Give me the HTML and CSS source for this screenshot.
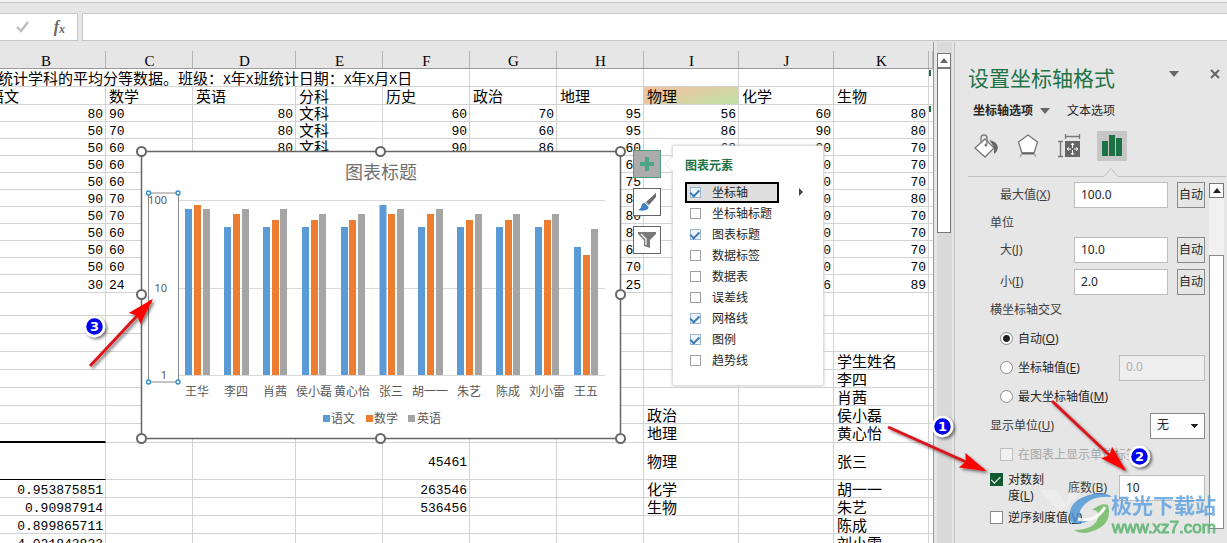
FILE: index.html
```html
<!DOCTYPE html>
<html lang="zh-CN">
<head>
<meta charset="utf-8">
<title>设置坐标轴格式</title>
<link rel="stylesheet" href="styles.css">
</head>
<body>
<div class="ribbon-edge"></div>
<header class="formula-bar">
  <div class="formula-tools">
    <button class="tool" aria-label="输入"><svg width="16" height="14" viewBox="0 0 16 14"><path d="M2 7l4 4 7-9" fill="none" stroke="#bdbdbd" stroke-width="2.4"/></svg></button>
    <button class="tool fx" aria-label="插入函数">f<sub>x</sub></button>
  </div>
  <input class="formula-input" aria-label="编辑栏">
</header>
<main class="workspace">
  <section class="sheet">
    <table class="grid">
      <colgroup><col class="w-b"><col class="w-s"><col class="w-d"><col class="w-s"><col class="w-s"><col class="w-s"><col class="w-s"><col class="w-l"><col class="w-l"><col class="w-l"><col></colgroup>
      <thead><tr><th>B</th><th>C</th><th>D</th><th>E</th><th>F</th><th>G</th><th>H</th><th>I</th><th>J</th><th>K</th><th></th></tr></thead>
      <tbody>
        <tr class="tall"><td colspan="5" class="title">统计学科的平均分等数据。班级：<span>X</span>年<span>X</span>班统计日期：<span>X</span>年<span>X</span>月<span>X</span>日</td><td></td><td></td><td></td><td></td><td></td><td class="flag"></td></tr>
        <tr class="tall"><td>语文</td><td>数学</td><td>英语</td><td>分科</td><td>历史</td><td>政治</td><td>地理</td><td class="tint">物理</td><td>化学</td><td>生物</td><td></td></tr>
        <tr><td class="n">80</td><td class="m">90</td><td class="n">80</td><td>文科</td><td class="n">60</td><td class="n">70</td><td class="n">95</td><td class="n">56</td><td class="n">60</td><td class="n">80</td><td class="flag"></td></tr>
        <tr><td class="n">50</td><td class="m">70</td><td class="n">80</td><td>文科</td><td class="n">90</td><td class="n">60</td><td class="n">95</td><td class="n">86</td><td class="n">90</td><td class="n">80</td><td></td></tr>
        <tr><td class="n">50</td><td class="m">60</td><td class="n">80</td><td>文科</td><td class="n">90</td><td class="n">86</td><td class="n">60</td><td class="n">68</td><td class="n">90</td><td class="n">70</td><td></td></tr>
        <tr><td class="n">50</td><td class="m">60</td><td></td><td></td><td></td><td></td><td class="n">65</td><td></td><td class="n">70</td><td class="n">70</td><td></td></tr>
        <tr><td class="n">50</td><td class="m">60</td><td></td><td></td><td></td><td></td><td class="n">75</td><td></td><td class="n">80</td><td class="n">70</td><td></td></tr>
        <tr><td class="n">90</td><td class="m">70</td><td></td><td></td><td></td><td></td><td class="n">85</td><td></td><td class="n">80</td><td class="n">80</td><td></td></tr>
        <tr><td class="n">50</td><td class="m">70</td><td></td><td></td><td></td><td></td><td class="n">80</td><td></td><td class="n">80</td><td class="n">70</td><td></td></tr>
        <tr><td class="n">50</td><td class="m">60</td><td></td><td></td><td></td><td></td><td class="n">85</td><td></td><td class="n">80</td><td class="n">70</td><td></td></tr>
        <tr><td class="n">50</td><td class="m">60</td><td></td><td></td><td></td><td></td><td class="n">62</td><td></td><td class="n">80</td><td class="n">70</td><td></td></tr>
        <tr><td class="n">50</td><td class="m">60</td><td></td><td></td><td></td><td></td><td class="n">70</td><td></td><td class="n">70</td><td class="n">70</td><td></td></tr>
        <tr class="tall"><td class="n">30</td><td class="m">24</td><td></td><td></td><td></td><td></td><td class="n">25</td><td></td><td class="n">66</td><td class="n">89</td><td></td></tr>
        <tr class="gap"><td></td><td></td><td></td><td></td><td></td><td></td><td></td><td></td><td></td><td></td><td></td></tr>
        <tr class="tall"><td></td><td></td><td></td><td></td><td></td><td></td><td></td><td></td><td></td><td></td><td></td></tr>
        <tr class="tall"><td></td><td></td><td></td><td></td><td></td><td></td><td></td><td></td><td></td><td></td><td></td></tr>
        <tr class="tall"><td></td><td></td><td></td><td></td><td></td><td></td><td></td><td></td><td></td><td>学生姓名</td><td></td></tr>
        <tr class="tall"><td></td><td></td><td></td><td></td><td></td><td></td><td></td><td></td><td></td><td>李四</td><td></td></tr>
        <tr class="tall"><td></td><td></td><td></td><td></td><td></td><td></td><td></td><td></td><td></td><td>肖茜</td><td></td></tr>
        <tr class="tall"><td></td><td></td><td></td><td></td><td></td><td></td><td></td><td>政治</td><td></td><td>侯小磊</td><td></td></tr>
        <tr class="plus"><td class="ruled"></td><td></td><td></td><td></td><td></td><td></td><td></td><td>地理</td><td></td><td>黄心怡</td><td></td></tr>
        <tr class="high"><td class="thin-rule"></td><td></td><td></td><td></td><td class="n">45461</td><td></td><td></td><td>物理</td><td></td><td>张三</td><td></td></tr>
        <tr class="tall"><td class="n">0.953875851</td><td></td><td></td><td></td><td class="n">263546</td><td></td><td></td><td>化学</td><td></td><td>胡一一</td><td></td></tr>
        <tr class="tall"><td class="n">0.90987914</td><td></td><td></td><td></td><td class="n">536456</td><td></td><td></td><td>生物</td><td></td><td>朱艺</td><td></td></tr>
        <tr class="tall"><td class="n">0.899865711</td><td></td><td></td><td></td><td></td><td></td><td></td><td></td><td></td><td>陈成</td><td></td></tr>
        <tr class="tall"><td class="n">4.021843833</td><td></td><td></td><td></td><td></td><td></td><td></td><td></td><td></td><td>刘小雷</td><td></td></tr>
      </tbody>
    </table>

    <svg class="chart" viewBox="133 143 496 304" width="496" height="304" role="img" aria-label="图表标题">
      <rect x="141.5" y="151.5" width="479" height="287" fill="#fff" stroke="#666" stroke-width="1.5"/>
      <text class="chart-title" x="381" y="179">图表标题</text>
      <path d="M179 200.5H605M179 288.5H605M179 375.5H605" stroke="#d9d9d9"/>
      <g fill="none" stroke-width="7">
        <path stroke="#5b9bd5" d="M188.500 375V209M227.500 375V227M266.500 375V227M305.500 375V227M344.500 375V227M383 375V205M421.500 375V227M460.500 375V227M499.500 375V227M538.500 375V227M577.500 375V247"/>
        <path stroke="#ed7d31" d="M197.500 375V205M236.500 375V214M275.500 375V220M314.500 375V220M352.500 375V220M391.500 375V214M430.500 375V214M469.500 375V220M508.500 375V220M547.500 375V220M586.500 375V255"/>
        <path stroke="#a5a5a5" d="M206.500 375V209M245.500 375V209M283.500 375V209M322.500 375V214M361.500 375V214M400.500 375V209M439.500 375V209M478.500 375V214M516.500 375V214M555.500 375V214M594.500 375V229"/>
      </g>
      <g class="axis-num"><text x="167" y="204">100</text><text x="167" y="292">10</text><text x="167" y="379">1</text></g>
      <g class="axis-name"><text x="197" y="396">王华</text><text x="236" y="396">李四</text><text x="275" y="396">肖茜</text><text x="314" y="396">侯小磊</text><text x="352" y="396">黄心怡</text><text x="391" y="396">张三</text><text x="430" y="396">胡一一</text><text x="469" y="396">朱艺</text><text x="508" y="396">陈成</text><text x="547" y="396">刘小雷</text><text x="586" y="396">王五</text></g>
      <g class="legend"><path fill="#5b9bd5" d="M323 415h7v7h-7z"/><text x="331" y="423">语文</text><path fill="#ed7d31" d="M366 415h7v7h-7z"/><text x="374" y="423">数学</text><path fill="#a5a5a5" d="M408 415h7v7h-7z"/><text x="417" y="423">英语</text></g>
      <path d="M148.500 193V382H178.500V193z" fill="none" stroke="#8a8a8a"/>
      <g fill="#fff" stroke="#2e8bc9" stroke-width="1.300"><circle cx="148.500" cy="193" r="2"/><circle cx="178" cy="193" r="2"/><circle cx="148.500" cy="382" r="2"/><circle cx="178" cy="382" r="2"/></g>
      <g fill="#fff" stroke="#666" stroke-width="2"><circle cx="141.500" cy="151.500" r="4.500"/><circle cx="380.500" cy="151.500" r="4.500"/><circle cx="620.500" cy="151.500" r="4.500"/><circle cx="141.500" cy="294.500" r="4.500"/><circle cx="620.500" cy="294.500" r="4.500"/><circle cx="141.500" cy="438.500" r="4.500"/><circle cx="380.500" cy="438.500" r="4.500"/><circle cx="620.500" cy="438.500" r="4.500"/></g>
    </svg>

    <div class="chart-tools">
      <button class="chart-tool on" aria-label="图表元素"><svg width="26" height="26" viewBox="0 0 26 26"><path d="M13 6v14M6 13h14" stroke="#4da386" stroke-width="4"/></svg></button>
      <button class="chart-tool" aria-label="图表样式"><svg width="26" height="26" viewBox="0 0 26 26"><path d="M22 4v4l-7 8-3-3z" fill="#6b6b6b"/><path d="M11 13l4 4-1 3c-3 2-7 2-10 1 3-1 3-3 4-6z" fill="#3f7fc1"/><path d="M10 13l5 5" stroke="#fff"/></svg></button>
      <button class="chart-tool" aria-label="图表筛选器"><svg width="26" height="26" viewBox="0 0 26 26"><path d="M4 5h18v2l-6 6v8l-6-2v-6L4 7z" fill="#7a7a7a"/><path d="M7 7l5 5v6" fill="none" stroke="#fff" stroke-width="1.200"/></svg></button>
    </div>

    <aside class="flyout">
      <svg class="flyout-notch" width="10" height="18" viewBox="0 0 10 18"><path d="M10 0L1 9l9 9z" fill="#fff"/><path d="M9 1L1 9l8 8" fill="none" stroke="#e4e4e4"/></svg>
      <h2>图表元素</h2>
      <label class="element current"><input type="checkbox" checked><span>坐标轴</span></label>
      <label class="element"><input type="checkbox"><span>坐标轴标题</span></label>
      <label class="element"><input type="checkbox" checked><span>图表标题</span></label>
      <label class="element"><input type="checkbox"><span>数据标签</span></label>
      <label class="element"><input type="checkbox"><span>数据表</span></label>
      <label class="element"><input type="checkbox"><span>误差线</span></label>
      <label class="element"><input type="checkbox" checked><span>网格线</span></label>
      <label class="element"><input type="checkbox" checked><span>图例</span></label>
      <label class="element"><input type="checkbox"><span>趋势线</span></label>
      <svg class="flyout-more" width="5" height="8" viewBox="0 0 5 8"><path d="M0 0l4 4-4 4z" fill="#444"/></svg>
    </aside>
  </section>

  <div class="sheet-scroll">
    <button class="scroll-up" aria-label="向上滚动"><svg width="8" height="5" viewBox="0 0 8 5"><path d="M0 5l4-5 4 5z" fill="#666"/></svg></button>
    <div class="sheet-thumb"></div>
  </div>

  <aside class="pane">
    <div class="pane-head">
      <h1>设置坐标轴格式</h1>
      <button class="plain" aria-label="任务窗格选项"><svg width="10" height="6" viewBox="0 0 10 6"><path d="M0 0h10L5 6z" fill="#666"/></svg></button>
      <button class="plain" aria-label="关闭"><svg width="10" height="10" viewBox="0 0 10 10"><path d="M1 1l8 8M9 1L1 9" stroke="#666" stroke-width="2"/></svg></button>
    </div>
    <nav class="tabs">
      <button class="plain tab strong">坐标轴选项<svg width="10" height="6" viewBox="0 0 10 6"><path d="M0 0h10L5 6z" fill="#666"/></svg></button>
      <button class="plain tab">文本选项</button>
    </nav>
    <div class="categories">
      <button class="plain cat" aria-label="填充与线条"><svg width="30" height="30" viewBox="0 0 30 30"><path d="M18 9q8 1 9 8-1 4-4 6 1-8-5-14z" fill="#666"/><path d="M14 8l9 9-9 9-10-9z" fill="#fff" stroke="#777" stroke-width="1.300"/><path d="M10 11V7q0-3 3-3t3 3v6" fill="none" stroke="#777" stroke-width="1.300"/><circle cx="15" cy="14" r="1.500" fill="#777"/></svg></button>
      <button class="plain cat" aria-label="效果"><svg width="30" height="30" viewBox="0 0 30 30"><path d="M15 4l9.500 7-3.500 11H9L5.500 11z" fill="#fff" stroke="#777" stroke-width="1.300"/><path d="M9 22l-2 4M21 22l2 4" stroke="#aaa" stroke-width="1.500"/><path d="M9 22.500h12" stroke="#666" stroke-width="2"/></svg></button>
      <button class="plain cat" aria-label="大小与属性"><svg width="30" height="30" viewBox="0 0 30 30"><path d="M10.500 3v5M24.500 3v5M11 5.500h13M3 10.500h5M3 25.500h5M5.500 11v14" stroke="#777" stroke-width="1.300"/><path d="M10 10h15v16H10z" fill="#666"/><path d="M17.500 12v5M17.500 19v5M12 18h4M19 18h4M16 14l1.500-2 1.500 2M16 22l1.500 2 1.500-2M14 16.500L12 18l2 1.500M21 16.500l2 1.500-2 1.500" stroke="#fff" fill="none"/></svg></button>
      <button class="plain cat on" aria-label="坐标轴选项"><svg width="30" height="30" viewBox="0 0 30 30"><path d="M5 10h6v15H5zM12 4h6v21h-6zM19 7h6v18h-6z" fill="#1e7145"/></svg></button>
    </div>
    <svg class="divider" width="260" height="10" viewBox="0 0 260 10"><path d="M0 8.500H136l7-8 7 8H258" fill="none" stroke="#c0c0c0"/></svg>
    <div class="pane-body">
      <form class="options">
        <div class="row"><label class="inset" for="max">最大值(<u>X</u>)</label><input class="field" id="max" value="100.0"><button type="button" class="auto">自动</button></div>
        <div class="row group">单位</div>
        <div class="row"><label class="inset" for="major">大(<u>J</u>)</label><input class="field" id="major" value="10.0"><button type="button" class="auto">自动</button></div>
        <div class="row spaced"><label class="inset" for="minor">小(<u>I</u>)</label><input class="field" id="minor" value="2.0"><button type="button" class="auto">自动</button></div>
        <div class="row group">横坐标轴交叉</div>
        <div class="row choice"><label class="inset pick"><input type="radio" name="cross" checked><span>自动(<u>O</u>)</span></label></div>
        <div class="row choice"><label class="inset pick"><input type="radio" name="cross"><span>坐标轴值(<u>E</u>)</span></label><input class="field wide" value="0.0" aria-label="坐标轴值" disabled></div>
        <div class="row choice"><label class="inset pick"><input type="radio" name="cross"><span>最大坐标轴值(<u>M</u>)</span></label></div>
        <div class="row choice"><label class="outer" for="unit">显示单位(<u>U</u>)</label><select id="unit"><option>无</option></select></div>
        <div class="row choice"><label class="inset pick off"><input type="checkbox" disabled><span>在图表上显示单位标签(<u>S</u>)</span></label></div>
        <div class="row log"><label class="outer pick"><input type="checkbox" checked><span>对数刻<br>度(<u>L</u>)</span></label><label class="base" for="base">底数(<u>B</u>)</label><input class="field wide" id="base" value="10"></div>
        <div class="row choice"><label class="outer pick"><input type="checkbox"><span>逆序刻度值(<u>V</u>)</span></label></div>
      </form>
      <div class="pane-scroll">
        <button class="pane-up" aria-label="向上滚动"><svg width="8" height="5" viewBox="0 0 8 5"><path d="M0 5l4-5 4 5z" fill="#222"/></svg></button>
        <div class="pane-thumb"></div>
      </div>
    </div>
  </aside>
</main>

<svg class="notes" width="1227" height="543" viewBox="0 0 1227 543" aria-hidden="true">
  <defs>
    <marker id="head" markerUnits="userSpaceOnUse" markerWidth="28" markerHeight="18" refX="24" refY="9" orient="auto"><path d="M0 1l27 8-27 8 4-8z" fill="#f00" stroke="none"/></marker>
    <filter id="shade" x="-20%" y="-20%" width="150%" height="150%"><feDropShadow dx="2" dy="2" stdDeviation="1.500" flood-opacity=".5"/></filter>
  </defs>
  <g class="brand">
    <path d="M1040 490h16l10 14 4-14h14l-24 22z" fill="#fff" opacity=".35"/>
    <path d="M1070 520q-4-22 28-27 10 0 14 4-24-2-32 14-2 8 8 10-14 6-18-1z" fill="#4b94d6"/>
    <path d="M1108 505q6 22-22 28-8 0-12-3 20 0 24-12 2-8-6-8 10-8 16-5z" fill="#6cbb5c"/>
    <path d="M1078 519q18 4 27-12" fill="none" stroke="#fff" stroke-width="3"/>
    <text class="brand-name" x="1111" y="513">极光下载站</text>
    <text class="brand-url" x="1112" y="533">www.xz7.com</text>
  </g>
  <g stroke="#d9141c" stroke-width="3" filter="url(#shade)">
    <path d="M90 366L151 301" marker-end="url(#head)"/>
    <path d="M888 427L984 470" marker-end="url(#head)"/>
    <path d="M1052 401L1124 469" marker-end="url(#head)"/>
  </g>
  <g fill="#0000f0" stroke="#fff" stroke-width="2.500" filter="url(#shade)"><circle cx="94.500" cy="326.500" r="9.500"/><circle cx="942.500" cy="426.500" r="9.500"/><circle cx="1139.500" cy="456.500" r="9.500"/></g>
  <g class="note-num"><text x="94.500" y="331">3</text><text x="942.500" y="431">1</text><text x="1139.500" y="461">2</text></g>
</svg>
</body>
</html>
```
FILE: styles.css
```css
* { box-sizing: border-box; }
body {
  margin: 0;
  height: 100vh;
  overflow: hidden;
  display: flex;
  flex-direction: column;
  background: #e6e6e6;
  color: #262626;
  font: 12px/16px "Noto Sans", "Noto Sans CJK SC", sans-serif;
}
button, input, select { font: inherit; color: inherit; margin: 0; padding: 0; border-radius: 0; }

.ribbon-edge { flex: none; height: 3px; background: #f3f3f3; border-bottom: 1px solid #c6c6c6; }
.formula-bar { flex: none; display: flex; gap: 4px; height: 28px; margin: 10px 0 1px; }
.formula-tools { display: flex; align-items: center; justify-content: space-between; width: 78px; padding: 0 12px 0 15px; background: #fff; border: 1px solid #c6c6c6; border-left: 0; }
.tool { display: flex; border: 0; background: none; }
.fx { display: block; font: italic bold 16px/18px "Liberation Serif", serif; color: #666; }
.fx sub { font-size: 12px; line-height: 0; vertical-align: -1px; }
.formula-input { flex: 1; background: #fff; border: 1px solid #c6c6c6; border-right: 0; }

.workspace { flex: 1; min-height: 0; display: flex; }
.sheet { position: relative; flex: 1; min-width: 0; overflow: hidden; background: #fff; border-right: 1px solid #9a9a9a; }

.grid { width: calc(100% + 14px); margin-left: -14px; table-layout: fixed; border-collapse: separate; border-spacing: 0; color: #000; }
.w-b { width: 120px; }
.w-s { width: 87px; }
.w-d { width: 103px; }
.w-l { width: 95px; }
.grid th { height: 27px; padding: 12px 0 0; font: 15px/14px "Liberation Serif", serif; background: linear-gradient(#b4b4b4, #b4b4b4) right bottom / 1px 17px no-repeat #e6e6e6; border-bottom: 1px solid #9a9a9a; }
.grid td { height: 17px; padding: 0 3px; white-space: nowrap; font: 15px/16px "Noto Sans CJK SC", sans-serif; border-right: 1px solid #d2d2d2; border-bottom: 1px solid #d2d2d2; }
.grid td:last-child { padding: 0; border-right: 0; }
.grid .tall td { height: 18px; }
.grid .gap td { height: 23px; }
.grid .plus td { height: 19px; }
.grid .high td { height: 37px; }
.grid .n, .grid .m { padding-top: 4px; font: 13px/12px "Liberation Mono", monospace; }
.grid .n { text-align: right; padding-right: 2px; }
.grid .title { padding-left: 12px; }
.title span { font: 13px/1px "Liberation Mono", monospace; }
.grid .tint { background: linear-gradient(165deg, #eec4a0 20%, #c2dfa4 90%); }
.grid .ruled { border-bottom: 2px solid #000; }
.grid .thin-rule { border-bottom-color: #000; }
.grid .flag { background: linear-gradient(#1e7145, #1e7145) 0 1px / 2px 6px no-repeat; }

.chart { position: absolute; left: 133px; top: 101px; font: 12px "Noto Sans CJK SC", sans-serif; fill: #595959; }
.chart-title { font-size: 18px; text-anchor: middle; fill: #707070; }
.axis-num { font: 11px "Noto Sans", sans-serif; text-anchor: end; }
.axis-name { text-anchor: middle; }

.chart-tools { position: absolute; left: 633px; top: 108px; display: flex; flex-direction: column; gap: 10px; }
.chart-tool { display: flex; width: 28px; height: 28px; background: #fff; border: 1px solid #666; }
.chart-tool.on { background: #ababab; border-color: #4f9b7c; }

.flyout { position: absolute; left: 673px; top: 104px; width: 150px; height: 239px; padding: 12px; background: #fff; box-shadow: 0 0 3px 1px #ccc; color: #262626; }
.flyout h2 { margin: 0 0 8px; font-size: 12px; line-height: 16px; color: #217346; }
.flyout-notch { position: absolute; left: -9px; top: 9px; }
.flyout-more { position: absolute; left: 126px; top: 42px; }
.element { display: flex; align-items: center; gap: 11px; width: 94px; height: 21px; padding-left: 5px; white-space: nowrap; }
.element.current { padding-left: 3px; border: 2px solid #000; background: #dfdfdf; }

input[type="checkbox"], input[type="radio"] { appearance: none; flex: none; width: 13px; height: 13px; background: #fff; border: 1px solid #8a8a8a; }
input[type="radio"] { border-radius: 50%; }
input[type="radio"]:checked { background: radial-gradient(circle, #222 3px, #fff 4px); }
.element input[type="checkbox"] { width: 11px; height: 11px; border-color: #a0a0a0; }
.element input[type="checkbox"]:checked, .log input[type="checkbox"]:checked { display: grid; place-items: center; }
.element input[type="checkbox"]:checked { border-color: #9db6cf; background: #eef4fb; }
.element input:checked::after, .log input:checked::after { content: ""; width: 7px; height: 4px; border: solid #3b78b5; border-width: 0 0 2px 2px; transform: rotate(-45deg) translateY(-1px); }
.log input[type="checkbox"]:checked { background: #125a32; border-color: #125a32; }
.log input:checked::after { width: 8px; border-color: #fff; border-width: 0 0 1px 1px; }

.sheet-scroll { flex: none; width: 21px; padding: 11px 3px 0; display: flex; flex-direction: column; border-right: 1px solid #c0c0c0; background: linear-gradient(#dadada, #dadada) 3px 0 / 15px 100% no-repeat #e6e6e6; }
.scroll-up { flex: none; display: grid; place-items: center; height: 15px; background: #fff; border: 1px solid #777; }
.sheet-thumb { flex: none; height: 165px; background: #fff; border: 1px solid #777; }

.pane { flex: none; width: 272px; display: flex; flex-direction: column; }
.plain { display: flex; align-items: center; border: 0; background: none; }
.pane-head { display: flex; align-items: center; height: 70px; padding: 0 7px 0 13px; }
.pane-head h1 { flex: 1; margin: 0; font: 21px/30px "Noto Sans CJK SC", sans-serif; color: #217346; }
.pane-head .plain { margin-bottom: 6px; margin-left: 31px; }
.tabs { flex: none; display: flex; gap: 17px; height: 16px; margin: -9px 0 0 18px; }
.tab { gap: 7px; line-height: 16px; }
.strong { font-weight: bold; }
.categories { flex: none; display: flex; gap: 12px; height: 30px; margin: 12px 0 0 16px; }
.cat { width: 30px; height: 30px; }
.cat.on { background: #c6c6c6; }
.divider { flex: none; margin: 7px 0 0 13px; }

.pane-body { flex: 1; min-height: 0; display: flex; padding-right: 3px; }
.options { flex: 1; padding-top: 4px; color: #404040; }
.row { display: flex; align-items: center; height: 26px; padding-right: 4px; }
.row.group { height: 29px; padding-left: 35px; }
.row.spaced { margin-top: 6px; }
.row.choice { height: 29px; }
.row.log { height: 30px; margin-top: 4px; }
.inset, .outer { flex: 1; white-space: nowrap; }
.inset { padding-left: 45px; }
.outer { padding-left: 35px; }
.pick { display: flex; align-items: center; color: #262626; }
.pick input { margin-right: 5px; }
.pick.off { color: #a6a6a6; }
.pick.off input { border-color: #c0c0c0; background: #f0f0f0; }
.log .pick { align-items: flex-start; line-height: 16px; }
.log .pick input { margin-top: 1px; }
.base { margin-right: 12px; }
.field { width: 94px; height: 26px; padding: 0 6px 2px; background: #fff; border: 1px solid #bdbdbd; color: #262626; }
.field.wide { width: 86px; }
.field:disabled { background: #eee; color: #b0b0b0; }
.auto { width: 28px; height: 26px; margin-left: 9px; border: 1px solid #8a8a8a; background: #e6e6e6; color: #262626; }
select { appearance: none; width: 55px; height: 26px; padding: 0 6px 2px; border: 1px solid #8a8a8a; background: linear-gradient(to bottom right, #222 50%, transparent 50%) 44px 10px / 4px 4px no-repeat, linear-gradient(to bottom left, #222 50%, transparent 50%) 40px 10px / 4px 4px no-repeat, #fff; color: #262626; }

.pane-scroll { flex: none; width: 15px; height: 346px; margin-top: 5px; display: flex; flex-direction: column; justify-content: space-between; background: #f0f0f0; }
.pane-up { display: grid; place-items: center; height: 15px; background: #fff; border: 1px solid #777; }
.pane-thumb { height: 274px; background: #fff; border: 1px solid #8a8a8a; }

.notes { position: absolute; left: 0; top: 0; pointer-events: none; }
.note-num { font: bold 13px "DejaVu Sans", sans-serif; fill: #fff; text-anchor: middle; }
.brand { opacity: .8; }
.brand-name { font: bold 21px "Noto Sans CJK SC", sans-serif; fill: #5a9fe0; }
.brand-url { font: 17px "Liberation Sans", sans-serif; fill: #52b06a; stroke: #52b06a; stroke-width: 1px; }
```
